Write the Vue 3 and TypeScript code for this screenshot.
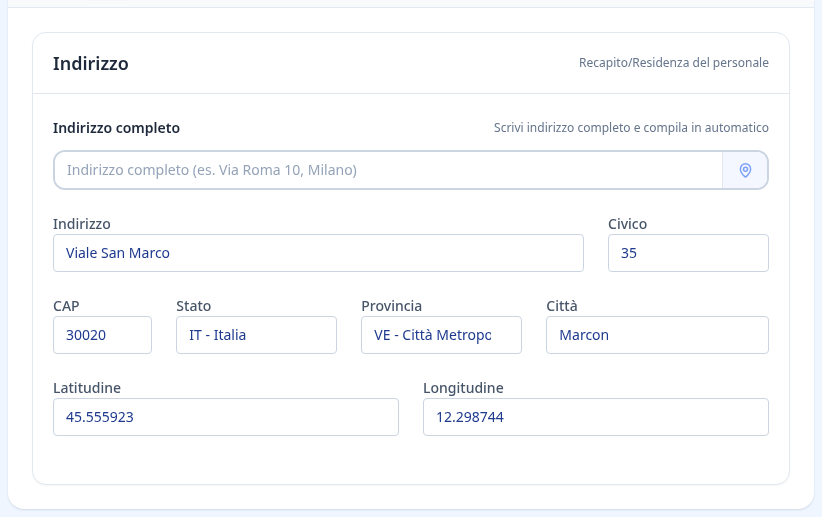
<script setup lang="ts">
interface Field {
  label: string;
  value: string;
  span: number;
}

const fields: Field[] = [
  { label: "Indirizzo", value: "Viale San Marco", span: 9 },
  { label: "Civico", value: "35", span: 3 },
  { label: "CAP", value: "30020", span: 2 },
  { label: "Stato", value: "IT - Italia", span: 3 },
  { label: "Provincia", value: "VE - Città Metropolitana di Venezia", span: 3 },
  { label: "Città", value: "Marcon", span: 4 },
  { label: "Latitudine", value: "45.555923", span: 6 },
  { label: "Longitudine", value: "12.298744", span: 6 },
];
</script>

<template>
  <div class="page">
    <div class="panel">
      <div class="panel-top"><span class="tab-edge"></span></div>
      <section class="card">
        <header class="card-header">
          <h2>Indirizzo</h2>
          <span class="hint header-hint">Recapito/Residenza del personale</span>
        </header>
        <div class="card-body">
          <div class="search-head">
            <label class="search-label">Indirizzo completo</label>
            <span class="hint">Scrivi indirizzo completo e compila in automatico</span>
          </div>
          <div class="search-box">
            <input type="text" placeholder="Indirizzo completo (es. Via Roma 10, Milano)" />
            <button type="button" aria-label="Posizione">
              <svg width="15" height="15" viewBox="0 0 24 24" fill="none" stroke="currentColor" stroke-width="2.4" stroke-linecap="round" stroke-linejoin="round">
                <path d="M12 22.5s-8.2-6.4-8.2-13a8.2 8.2 0 0 1 16.4 0c0 6.6-8.2 13-8.2 13z" />
                <circle cx="12" cy="9.8" r="3.2" />
              </svg>
            </button>
          </div>
          <div class="fields">
            <div
              v-for="field in fields"
              :key="field.label"
              class="field"
              :style="{ gridColumn: `span ${field.span}` }"
            >
              <label>{{ field.label }}</label>
              <input type="text" :value="field.value" />
            </div>
          </div>
        </div>
      </section>
    </div>
  </div>
</template>

<style>
html,
body {
  background: #eff6ff;
}
</style>

<style scoped>
.page {
  height: 517px;
  box-sizing: border-box;
  padding: 0 8px 8px;
  font-family: "Noto Sans", sans-serif;
  overflow: hidden;
  will-change: transform;
}

.panel {
  height: 100%;
  box-sizing: border-box;
  background: #ffffff;
  border-radius: 0 0 16px 16px;
  box-shadow: 0 1px 2px rgba(148, 163, 184, 0.35);
}

.panel-top {
  height: 7px;
  background: #f8fafc;
  border-bottom: 1px solid #e2e8f0;
  margin-bottom: 24px;
}

.tab-edge {
  display: block;
  width: 40px;
  height: 1px;
  margin-left: 80px;
  background: #f4f6f9;
}

.card {
  margin: 0 24px;
  height: 453px;
  box-sizing: border-box;
  border: 1px solid #e2e8f0;
  border-radius: 14px;
  background: #ffffff;
  box-shadow: 0 1px 2px rgba(15, 23, 42, 0.04);
}

.card-header {
  display: flex;
  align-items: center;
  justify-content: space-between;
  height: 61px;
  box-sizing: border-box;
  padding: 0 20px;
  border-bottom: 1px solid #e2e8f0;
}

.card-header h2 {
  margin: 0;
  font-size: 18px;
  font-weight: 600;
  color: #1e293b;
}

.hint {
  font-size: 12px;
  color: #64748b;
}

.header-hint {
  margin-bottom: 2px;
}

.card-body {
  padding: 23px 20px 0;
}

.search-head {
  display: flex;
  align-items: center;
  justify-content: space-between;
  height: 20px;
  margin-bottom: 13px;
}

.search-label {
  font-size: 14px;
  font-weight: 600;
  color: #1e293b;
}

.search-box {
  display: flex;
  height: 40px;
  box-sizing: border-box;
  border: 2px solid #cbd5e1;
  border-radius: 12px;
  overflow: hidden;
  margin-bottom: 24px;
}

.search-box input {
  flex: 1;
  min-width: 0;
  border: none;
  outline: none;
  padding: 0 12px 2px;
  font: inherit;
  font-size: 14px;
  color: #1e3a8a;
}

.search-box input::placeholder {
  color: #94a3b8;
  opacity: 1;
}

.search-box button {
  width: 45px;
  padding: 1px 0 0;
  border: none;
  border-left: 1px solid #e2e8f0;
  background: #f4f7ff;
  color: #7ba0f8;
  display: flex;
  align-items: center;
  justify-content: center;
}

.fields {
  display: grid;
  grid-template-columns: repeat(12, 1fr);
  column-gap: 24px;
  row-gap: 24px;
}

.field {
  display: flex;
  flex-direction: column;
  min-width: 0;
}

.field label {
  height: 20px;
  line-height: 20px;
  font-size: 14px;
  font-weight: 500;
  color: #475569;
}

.field input {
  width: 100%;
  height: 38px;
  box-sizing: border-box;
  border: 1px solid #cbd5e1;
  border-radius: 4px;
  outline: none;
  padding: 0 30px 2px 12px;
  font: inherit;
  font-size: 14px;
  color: #1e3a8f;
  background: #ffffff;
}
</style>
